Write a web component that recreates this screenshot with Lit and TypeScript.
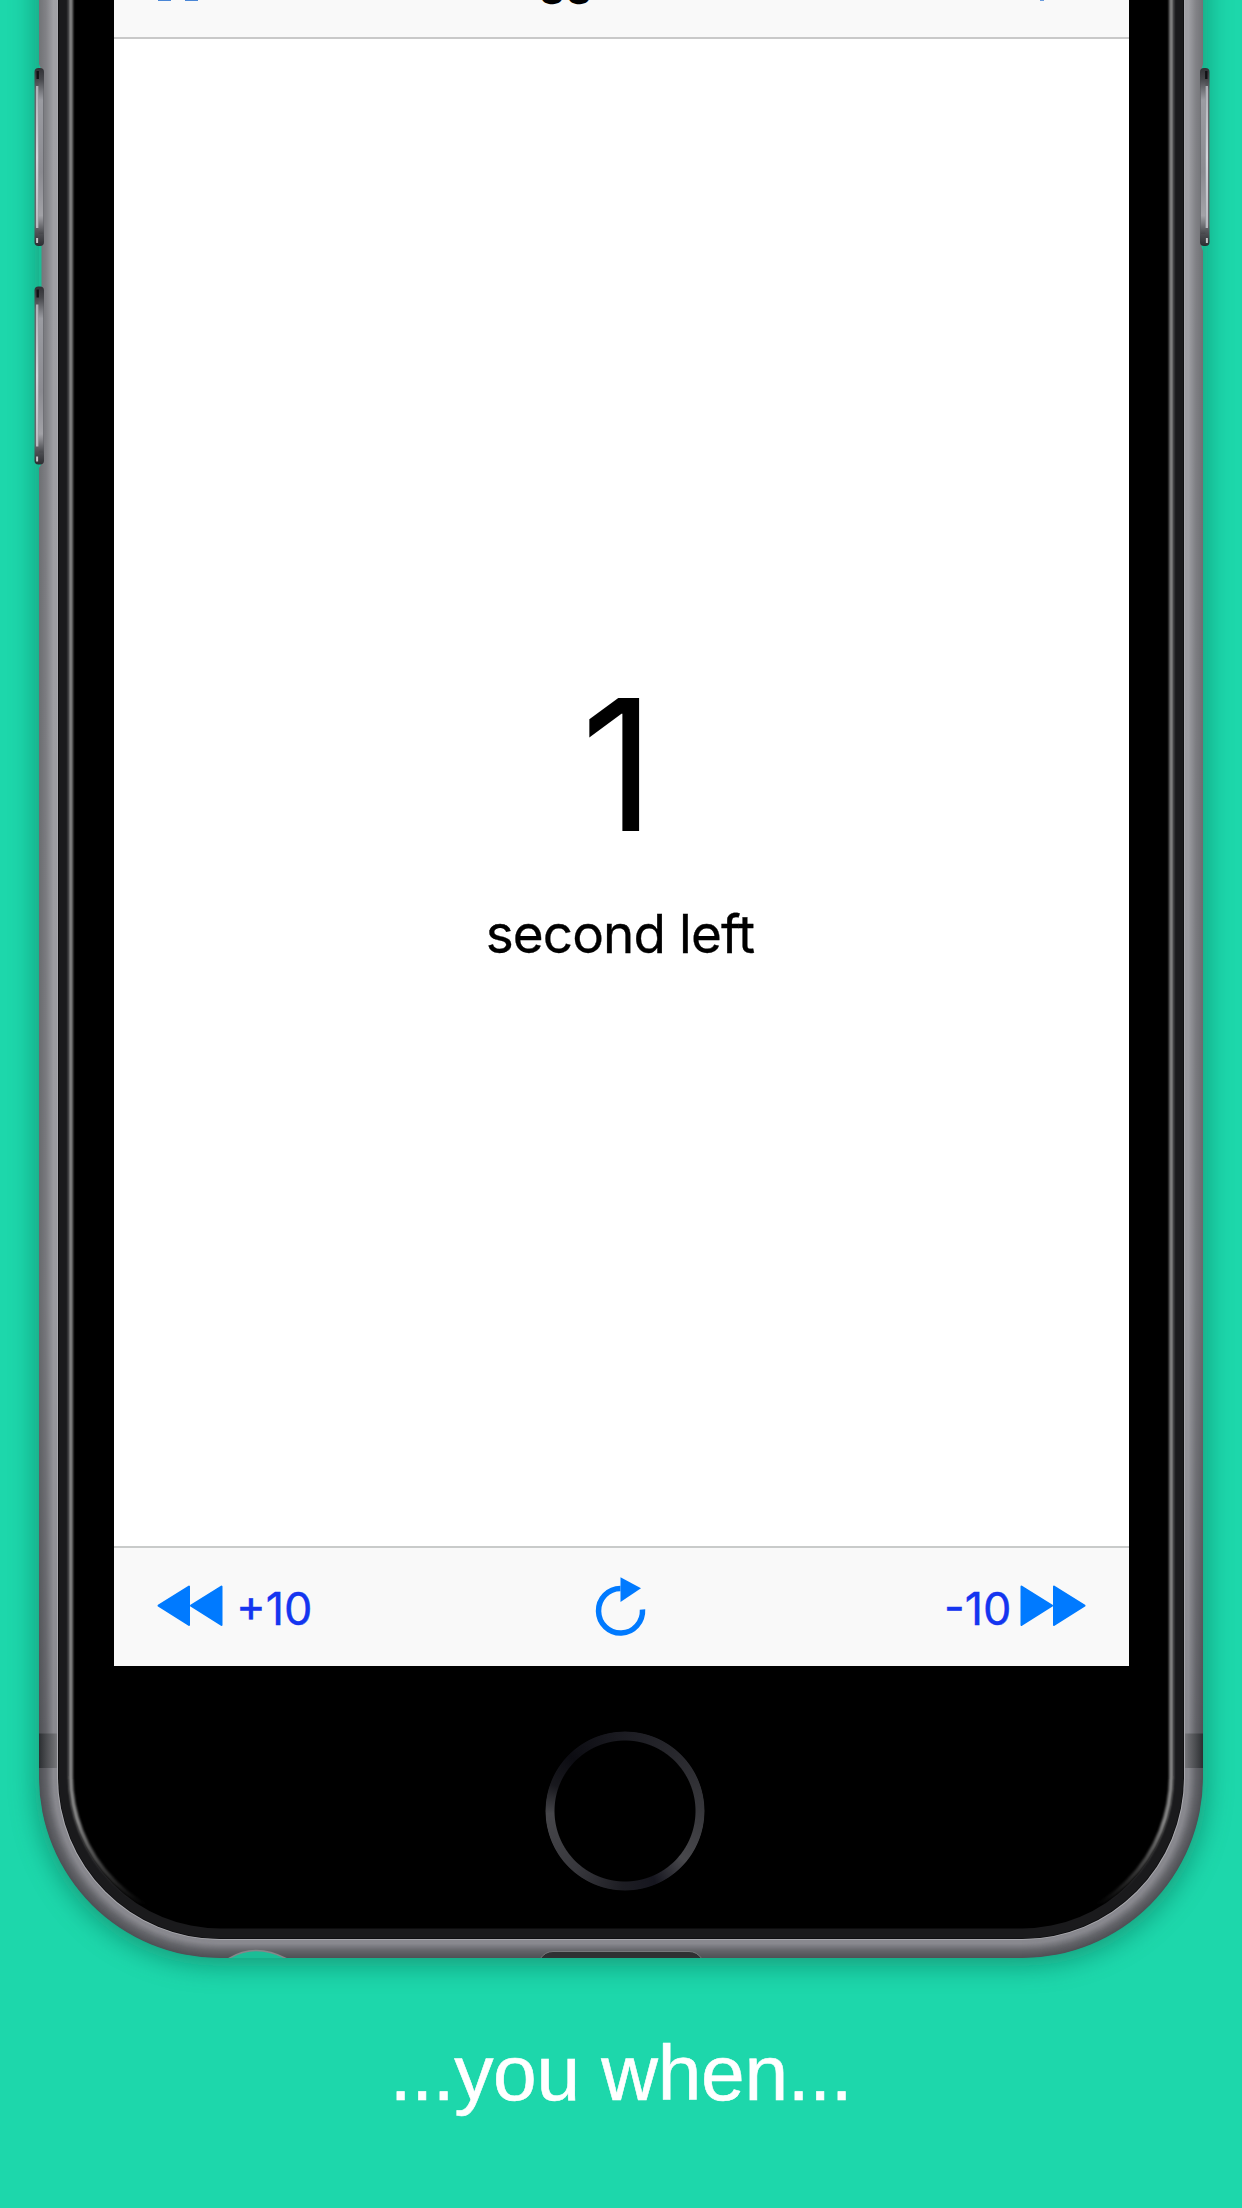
import { LitElement, html, svg, css } from "lit";
import { customElement, property } from "lit/decorators.js";

/** Blend two RGB triples. */
const mix = (a: number[], b: number[], t: number) =>
  `rgb(${a.map((v, i) => Math.round(v + (b[i] - v) * t)).join(",")})`;

/** Rounded outline of the phone, shrunk by a given inset. */
const shell = (inset: number, radius: number, fill: string) => svg`
  <rect x=${39 + inset} y="-400" width=${1164 - 2 * inset} height=${2358 - inset}
    rx=${radius} ry=${radius} fill=${fill}></rect>`;

@customElement("phone-frame")
export class PhoneFrame extends LitElement {
  static styles = css`
    :host { display: block; }
    svg { display: block; }
  `;

  private sideButton(x: number, y: number, flip: boolean) {
    const t = flip ? `translate(${x + 10} ${y}) scale(-1 1)` : `translate(${x} ${y})`;
    return svg`<g transform=${t}>
      <rect x="0" y="0" width="9.5" height="178" rx="4" fill="url(#btnEdge)"></rect>
      <rect x="1.5" y="18" width="2.6" height="142" fill="url(#btnShine)"></rect>
      <rect x="4.1" y="12" width="4.6" height="154" fill="url(#btnFace)"></rect>
      <rect x="1.6" y="170" width="2" height="5" fill="#c4c5c8"></rect>
      <rect x="2" y="3" width="2.4" height="8" fill="#101114"></rect>
    </g>`;
  }

  render() {
    const rings = Array.from({ length: 39 }, (_, i) => {
      const d = i / 2;
      const t = d / 19;
      const c = t < 0.35
        ? mix([80, 81, 86], [98, 99, 104], t / 0.35)
        : mix([98, 99, 104], [137, 137, 143], Math.min(1, (t - 0.35) / 0.4));
      return shell(d, 181 - d, c);
    });
    return html`<svg width="1242" height="2000" viewBox="0 0 1242 2000">
      <defs>
        <filter id="soft" x="-10%" y="-10%" width="120%" height="120%">
          <feGaussianBlur stdDeviation="13"></feGaussianBlur>
        </filter>
        <filter id="glow"><feGaussianBlur stdDeviation="0.8"></feGaussianBlur></filter>
        <linearGradient id="btnEdge" x1="0" y1="0" x2="0" y2="1">
          <stop offset="0" stop-color="#303135"></stop>
          <stop offset=".06" stop-color="#45464a"></stop>
          <stop offset=".13" stop-color="#66676c"></stop>
          <stop offset=".88" stop-color="#66676c"></stop>
          <stop offset="1" stop-color="#2c2d31"></stop>
        </linearGradient>
        <linearGradient id="btnShine" x1="0" y1="0" x2="0" y2="1">
          <stop offset="0" stop-color="#aeb0b6"></stop>
          <stop offset=".5" stop-color="#d3d6dc"></stop>
          <stop offset="1" stop-color="#b8bac0"></stop>
        </linearGradient>
        <linearGradient id="btnFace" x1="0" y1="0" x2="0" y2="1">
          <stop offset="0" stop-color="#4a4b4f"></stop>
          <stop offset=".13" stop-color="#9b9ca2"></stop>
          <stop offset=".6" stop-color="#8b8b91"></stop>
          <stop offset=".88" stop-color="#a2a2a7"></stop>
          <stop offset="1" stop-color="#45464a"></stop>
        </linearGradient>
        <linearGradient id="lift" x1="0" y1="0" x2="0" y2="1">
          <stop offset="0" stop-color="#fff" stop-opacity=".2"></stop>
          <stop offset=".75" stop-color="#fff" stop-opacity=".14"></stop>
          <stop offset="1" stop-color="#fff" stop-opacity="0"></stop>
        </linearGradient>
        <linearGradient id="bandL"><stop offset="0" stop-color="#2b2e31"></stop><stop offset="1" stop-color="#7b7b7f"></stop></linearGradient>
        <linearGradient id="bandR"><stop offset="0" stop-color="#7b7b7f"></stop><stop offset="1" stop-color="#2b2e31"></stop></linearGradient>
        <linearGradient id="rim" gradientUnits="userSpaceOnUse" x1="0" y1="1740" x2="0" y2="1905">
          <stop offset="0" stop-color="#858585"></stop>
          <stop offset=".5" stop-color="#858585"></stop>
          <stop offset="1" stop-color="#858585" stop-opacity="0"></stop>
        </linearGradient>
        <clipPath id="body"><rect x="39" y="-400" width="1164" height="2358" rx="181"></rect></clipPath>
      </defs>

      <rect x="35" y="-400" width="1172" height="2366" rx="184" fill="#0a6a52" opacity=".52" filter="url(#soft)"></rect>
      ${rings}
      <rect x="39" y="0" width="19" height="1733" fill="url(#lift)"></rect>
      <rect x="1184" y="0" width="19" height="1733" fill="url(#lift)"></rect>
      <path d="M39 64l2.5 6v394l-2.5 4z" fill="#1bbd96"></path>
      <path d="M1203 64l-1.5 6v177l1.5 4z" fill="#1bbd96"></path>
      <rect x="39" y="1733.5" width="19" height="34.5" fill="url(#bandL)"></rect>
      <rect x="1184" y="1733.5" width="19" height="34.5" fill="url(#bandR)"></rect>

      <g clip-path="url(#body)">
        <path d="M540 1959q5-7.500 13-7.500h136q8 0 13 7.500z" fill="#2f3133" stroke="#77787b" stroke-width="1"></path>
        <path d="M228 1959q27-17 59 0z" fill="#1bbd96" stroke="#85878a" stroke-width="1.600"></path>
      </g>

      ${shell(18, 163, "#a9a9ae")}
      ${shell(19, 162, "#0d0d0f")}
      ${shell(19.7, 161.3, "#1a1a1c")}
      ${shell(29.5, 152, "#000")}
      <path d="M70.700 -10V1776A150 150 0 0 0 220.700 1926M1171.300 -10V1776A150 150 0 0 1 1021.300 1926"
        fill="none" stroke="url(#rim)" stroke-width="4.400" filter="url(#glow)"></path>
      <rect x="67" y="0" width="1.200" height="1776" fill="#303032"></rect>
      <rect x="1173.800" y="0" width="1.200" height="1776" fill="#303032"></rect>

      ${this.sideButton(34.5, 68, false)}
      ${this.sideButton(34.5, 286.5, false)}
      ${this.sideButton(1199.5, 68, true)}
    </svg>`;
  }
}

@customElement("skip-icon")
export class SkipIcon extends LitElement {
  @property() direction = "back";
  static styles = css`
    :host { display: block; }
    svg { display: block; }
    path { fill: #007aff; stroke: #007aff; stroke-width: 2; stroke-linejoin: round; }
  `;
  render() {
    return html`<svg width="66" height="42" viewBox="0 0 66 42">
      ${this.direction === "back"
        ? svg`<path d="M1.500 20.700L32 1.500V40zM34 20.700L64.500 1.500V40z"></path>`
        : svg`<path d="M1.500 1.500L32 20.700L1.500 40zM34 1.500L64.500 20.700L34 40z"></path>`}
    </svg>`;
  }
}

@customElement("timer-screen")
export class TimerScreen extends LitElement {
  static styles = css`
    :host {
      display: grid;
      grid-template-rows: 39px 1fr 120px;
      width: 1015px;
      height: 1665.500px;
      background: #fff;
      font-family: Inter, "Liberation Sans", sans-serif;
      color: #000;
      overflow: hidden;
    }
    .nav {
      box-sizing: border-box;
      background: #f9f9f9;
      border-bottom: 2px solid #c9c9c9;
      overflow: hidden;
      display: flex;
      align-items: flex-start;
    }
    .pause { display: flex; gap: 13.500px; margin-left: 43.500px; }
    .bar { width: 13.500px; height: 1px; background: #4a86d6; }
    .title {
      margin: -47px 0 0 341px;
      font-size: 43px;
      font-weight: 600;
      line-height: 52px;
      white-space: nowrap;
    }
    .tip { width: 4px; height: 1px; margin-left: auto; margin-right: 85px; background: #6a9bdc; }
    .count { display: flex; flex-direction: column; align-items: center; }
    .number { margin: 615px 7px 0 0; font-size: 183px; line-height: 222px; }
    .unit {
      margin: 26px 3px 0 0;
      font-size: 53px;
      line-height: 64px;
      letter-spacing: -0.900px;
      white-space: nowrap;
      -webkit-text-stroke: 0.300px #000;
    }
    .tools {
      box-sizing: border-box;
      display: grid;
      grid-template-columns: 1fr auto 1fr;
      align-items: start;
      padding: 0 43px;
      background: #f9f9f9;
      border-top: 2px solid #c9cbca;
    }
    .skip { display: flex; align-items: flex-start; padding-top: 37px; color: #1435f0; }
    .skip.end { justify-content: flex-end; }
    .amount { margin-top: -3px; font-size: 45px; line-height: 54px; -webkit-text-stroke: 0.400px #1435f0; }
    .plus { margin-left: 13px; }
    .minus { margin-right: 8.500px; }
    .reload { display: block; margin: 28px 1.500px 0 0; }
  `;
  render() {
    return html`
      <div class="nav">
        <div class="pause"><div class="bar"></div><div class="bar"></div></div>
        <div class="title">gg</div>
        <div class="tip"></div>
      </div>
      <div class="count">
        <div class="number">1</div>
        <div class="unit">second left</div>
      </div>
      <div class="tools">
        <div class="skip">
          <skip-icon direction="back"></skip-icon>
          <span class="amount plus">+10</span>
        </div>
        <svg class="reload" width="52" height="62" viewBox="0 0 52 62">
          <path d="M25.500 12.500A22 22.300 0 1 0 47.500 33.500" fill="none" stroke="#007aff" stroke-width="5.500"></path>
          <path d="M25.500 1.300L46 12.200L25.500 26z" fill="#007aff"></path>
        </svg>
        <div class="skip end">
          <span class="amount minus">-10</span>
          <skip-icon direction="forward"></skip-icon>
        </div>
      </div>`;
  }
}

@customElement("app-root")
export class AppRoot extends LitElement {
  static styles = css`
    :host { display: block; }
    .poster {
      width: 1242px;
      height: 2208px;
      overflow: hidden;
      background: #1dd7ab;
      display: flex;
      flex-direction: column;
    }
    .device { display: grid; justify-items: start; align-items: start; height: 2000px; }
    .device > * { grid-area: 1 / 1; }
    .screen { margin-left: 114px; }
    .home {
      width: 160px;
      height: 160px;
      margin: 1731px 0 0 545px;
      border-radius: 50%;
      background: conic-gradient(#1c1c22 0deg, #2c2c31 55deg, #37373b 90deg, #48484c 130deg,
        #16161f 157deg, #1d1d23 182deg, #38383d 220deg, #46464a 268deg, #18181d 290deg,
        #0c0c12 315deg, #1c1c22 360deg);
      -webkit-mask: radial-gradient(circle, transparent 70px, #000 71px, #000 79px, transparent 80px);
      mask: radial-gradient(circle, transparent 70px, #000 71px, #000 79px, transparent 80px);
    }
    .caption {
      margin-top: 28px;
      text-align: center;
      color: #fff;
      font: 78.500px/90px "Liberation Sans", Arial, sans-serif;
      letter-spacing: -0.300px;
      -webkit-text-stroke: 0.600px #fff;
    }
  `;
  render() {
    return html`<div class="poster">
      <div class="device">
        <phone-frame></phone-frame>
        <timer-screen class="screen"></timer-screen>
        <div class="home"></div>
      </div>
      <div class="caption">...you when...</div>
    </div>`;
  }
}
